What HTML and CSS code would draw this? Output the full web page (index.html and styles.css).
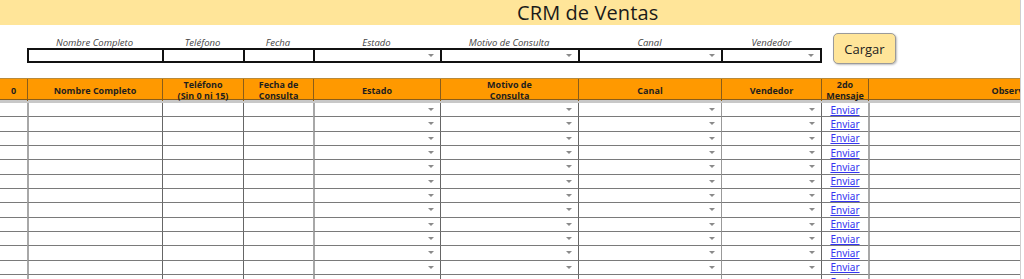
FILE: index.html
```html
<!DOCTYPE html>
<html lang="es">
<head>
<meta charset="utf-8">
<title>CRM de Ventas</title>
<link rel="stylesheet" href="styles.css">
</head>
<body>
<div class="page">
  <header class="titlebar"><h1>CRM de Ventas</h1></header>

  <section class="filters">
    <div class="filter-grid">
      <label class="flabel">Nombre Completo</label>
      <label class="flabel">Teléfono</label>
      <label class="flabel">Fecha</label>
      <label class="flabel">Estado</label>
      <label class="flabel">Motivo de Consulta</label>
      <label class="flabel">Canal</label>
      <label class="flabel">Vendedor</label>
      <div class="finput"></div>
      <div class="finput"></div>
      <div class="finput"></div>
      <div class="finput dd"><span class="arrow"></span></div>
      <div class="finput dd"><span class="arrow"></span></div>
      <div class="finput dd"><span class="arrow"></span></div>
      <div class="finput dd last"><span class="arrow"></span></div>
    </div>
    <button class="cargar">Cargar</button>
  </section>

  <div class="sheet">
    <div class="row head">
      <div class="c">0</div>
      <div class="c">Nombre Completo</div>
      <div class="c">Teléfono<br>(Sin 0 ni 15)</div>
      <div class="c">Fecha de<br>Consulta</div>
      <div class="c">Estado</div>
      <div class="c">Motivo de<br>Consulta</div>
      <div class="c">Canal</div>
      <div class="c">Vendedor</div>
      <div class="c">2do<br>Mensaje</div>
      <div class="c">Observaciones</div>
    </div>
    <div id="rows"></div>
  </div>
</div>
<script src="app.js"></script>
</body>
</html>
```

FILE: app.js
```js
(function () {
  var host = document.getElementById('rows');
  var html = '';
  for (var i = 0; i < 13; i++) {
    html += '<div class="row body">' +
      '<div class="c g1"></div>' +
      '<div class="c g2"></div>' +
      '<div class="c g3"></div>' +
      '<div class="c g4"></div>' +
      '<div class="c g5 dd"><span class="arrow"></span></div>' +
      '<div class="c g6 dd"><span class="arrow"></span></div>' +
      '<div class="c g7 dd"><span class="arrow"></span></div>' +
      '<div class="c g8 dd"><span class="arrow"></span></div>' +
      '<div class="c g9"><a href="#">Enviar</a></div>' +
      '<div class="c g10"></div>' +
      '</div>';
  }
  host.innerHTML = html;
})();
```

FILE: styles.css
```css
* { box-sizing: border-box; }

html, body {
  margin: 0;
  padding: 0;
  background: #ffffff;
}

body {
  font-family: "Open Sans", "Noto Sans", "Liberation Sans", sans-serif;
  color: #222;
  overflow: hidden;
}

.page {
  width: 1021px;
  height: 279px;
  overflow: hidden;
  border-right: 1px solid #cfcfcf;
}

.titlebar {
  height: 25px;
  background: #ffe599;
  display: flex;
  align-items: center;
  padding-left: 517px;
}

.titlebar h1 {
  margin: 0;
  font-weight: 400;
  font-size: 20px;
  line-height: 25px;
  color: #1a1a1a;
  letter-spacing: 0.1px;
}

.filters {
  display: flex;
  align-items: flex-start;
  padding-left: 27px;
  height: 53px;
}

.filter-grid {
  display: grid;
  grid-template-columns: 135px 81px 70px 127px 138px 143px 101px;
  grid-template-rows: 11px 15px;
  margin-top: 12px;
}

.flabel {
  font-style: italic;
  font-size: 9.5px;
  line-height: 11px;
  color: #444;
  text-align: center;
}

.finput {
  border-top: 2px solid #111;
  border-bottom: 2px solid #111;
  border-left: 2px solid #111;
  height: 15px;
  background: #fff;
}

.finput.last {
  border-right: 2px solid #111;
}

.dd {
  display: flex;
  align-items: center;
  justify-content: flex-end;
  padding-right: 6px;
}

.arrow {
  width: 0;
  height: 0;
  border-left: 3px solid transparent;
  border-right: 3px solid transparent;
  border-top: 3px solid #8a8a8a;
}

.cargar {
  margin-left: 11px;
  margin-top: 8px;
  width: 63px;
  height: 31px;
  background: #ffe599;
  border: 1px solid #9a9a9a;
  border-radius: 5px;
  box-shadow: 1px 1px 2px rgba(0, 0, 0, 0.25);
  font-family: "Open Sans", "Noto Sans", sans-serif;
  font-size: 13px;
  color: #222;
  padding: 0;
}

.sheet {
  width: 1180px;
}

.row {
  display: grid;
  grid-template-columns: 27px 135px 81px 70px 127px 138px 143px 100px 47px 312px;
}

.row.head {
  height: 25px;
  background: #ff9900;
  border-top: 1px solid #b88a3a;
  border-bottom: 3px solid #c8c8c8;
  box-shadow: inset 0 -1px 0 #8a5d1a;
}

.row.head .c {
  display: flex;
  align-items: center;
  justify-content: center;
  text-align: center;
  font-weight: 700;
  font-size: 9px;
  line-height: 11px;
  color: #1e1e1e;
  border-left: 1px solid #8a5d1a;
}

.row.head .c:first-child {
  border-left: none;
}

.row.body {
  height: 14.33px;
}

.row.body .c {
  border-bottom: 1px solid #7a7a7a;
  border-left: 1px solid #666;
  height: 14.33px;
}

.row.body .g1 { border-left: none; }
.row.body .g2 { border-left: 2px solid #a8a8a8; }
.row.body .g5 { border-left: 2px solid #a8a8a8; }
.row.body .g8 { border-left: 1px solid #999; }
.row.body .g10 { border-left: 2px solid #a8a8a8; }

.g9 {
  display: flex;
  align-items: center;
  justify-content: center;
}

.g9 a {
  font-family: "Noto Sans", "Open Sans", sans-serif;
  font-size: 10px;
  line-height: 12px;
  color: #3535f0;
  text-decoration: underline;
}
```
